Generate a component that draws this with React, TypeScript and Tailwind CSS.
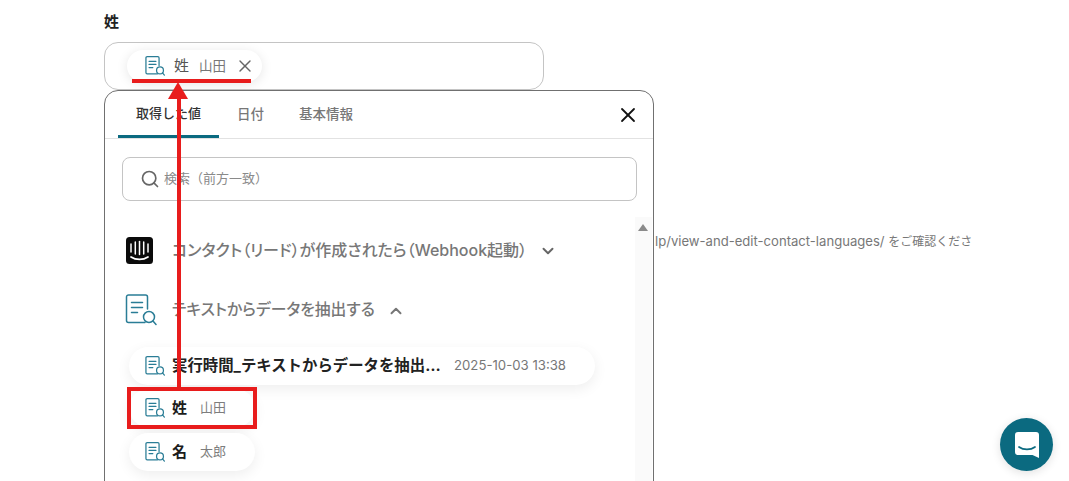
import { X, Search, ChevronDown, ChevronUp } from 'lucide-react';

function DocSearchIcon({ size = 20 }: { size?: number }) {
  return (
    <svg width={size} height={size} viewBox="0 0 32 32" fill="none" stroke="#2a7d96" strokeWidth={size > 24 ? 1.5 : 2} className="shrink-0">
      <path d="M20 28.5H3.5a2 2 0 0 1-2-2V3a2 2 0 0 1 2-2h17a2 2 0 0 1 2 2v12" strokeLinecap="round" />
      <path d="M6.5 8.5h11M6.5 13.5h11M6.5 18.5h6" strokeLinecap="round" />
      <circle cx="24" cy="23" r="5.5" />
      <path d="M28 27 31 30.5" strokeLinecap="round" />
    </svg>
  );
}

function IntercomLogo() {
  return (
    <svg width="27" height="27" viewBox="0 0 27 27" className="shrink-0">
      <rect width="27" height="27" rx="3.5" fill="#0b0b0b" />
      <g stroke="#fff" strokeWidth="1.5" strokeLinecap="round" fill="none">
        <path d="M5 7v8" />
        <path d="M9.3 5v12" />
        <path d="M13.5 4.5v13" />
        <path d="M17.7 5v12" />
        <path d="M22 7v8" />
        <path d="M5 20c5 3.2 12 3.2 17 0" strokeWidth="1.7" />
      </g>
    </svg>
  );
}

function ValueChip({ name, value, className }: { name: string; value: string; className: string }) {
  return (
    <div className={`flex h-[38px] w-fit items-center rounded-full bg-white pl-[16px] pr-[29px] shadow-[0_4px_14px_rgba(0,0,0,0.07)] ${className}`}>
      <DocSearchIcon />
      <span className="ml-[7px] text-[15px] font-bold text-[#1c1c1c]">{name}</span>
      <span className="ml-[13px] text-[13px] text-[#7d7d7d]">{value}</span>
    </div>
  );
}

export default function App() {
  return (
    <div className="relative h-[481px] w-[1069px] overflow-hidden bg-white pl-[104px] font-['Inter','Noto_Sans_CJK_JP',sans-serif]">
      <div className="flex h-[42px] items-center text-[15px] font-bold leading-none text-[#222]">姓</div>

      <div className="flex h-[48px] w-[440px] items-center rounded-[14px] border border-[#c4c4c4] pb-[1px] pl-[22px]">
        <div className="flex h-[32px] items-center rounded-full bg-white pl-[18px] pr-[7px] shadow-[0_2px_12px_rgba(0,0,0,0.1)]">
          <DocSearchIcon />
          <span className="ml-[9px] mt-[2px] text-[15px] text-[#555]">姓</span>
          <span className="ml-[10px] mt-[2px] text-[13.5px] text-[#777]">山田</span>
          <X size={20} strokeWidth={1.7} className="ml-[9px] mt-[1px] text-[#666]" />
        </div>
      </div>

      <div className="flex items-start">
        <div className="h-[420px] w-[550px] shrink-0 rounded-t-[14px] border border-[#707070] bg-white">
          {/* tabs */}
          <div className="flex h-[48px] items-stretch justify-between border-b border-[#e2e2e2] pl-[13px] pr-[13px]">
            <div className="flex text-[13.5px] font-medium">
              <div className="flex w-[101px] items-center justify-center border-b-[3px] border-[#0b6a80] pt-[2px] text-[13px] text-[#333]">取得した値</div>
              <div className="flex w-[63px] items-center justify-center text-[#777]">日付</div>
              <div className="ml-[9px] flex w-[70px] items-center justify-center text-[#777]">基本情報</div>
            </div>
            <button className="flex items-center text-[#111]">
              <X size={24} strokeWidth={1.8} />
            </button>
          </div>

          <div className="px-[17px] pt-[18px]">
            <div className="flex h-[44px] w-[515px] items-center rounded-[8px] border border-[#c4c4c4] pl-[17px]">
              <Search size={20} strokeWidth={2} className="text-[#666]" />
              <span className="ml-[4px] text-[13px] text-[#8a8a8a]">検索（前方一致）</span>
            </div>
          </div>

          <div className="flex">
            <div className="w-[530px] pt-[33px]">
              <div className="flex h-[32px] items-center pl-[21px]">
                <IntercomLogo />
                <span className="ml-[19px] text-[16px] font-medium text-[#777] [font-feature-settings:'palt']">コンタクト（リード）が作成されたら（Webhook起動）</span>
                <ChevronDown size={18} strokeWidth={2.6} className="ml-[12px] mt-[2px] text-[#666]" />
              </div>
              <div className="mt-[28px] flex h-[32px] items-center pl-[20px]">
                <DocSearchIcon size={32} />
                <span className="ml-[15px] text-[15.8px] font-medium text-[#777] [font-feature-settings:'palt']">テキストからデータを抽出する</span>
                <ChevronUp size={18} strokeWidth={2.6} className="ml-[12px] mt-[2px] text-[#777]" />
              </div>
              <div className="mt-[21px] flex flex-col pl-[24px]">
                <div className="flex h-[38px] w-[466px] items-center rounded-full bg-white pl-[16px] shadow-[0_4px_14px_rgba(0,0,0,0.07)]">
                  <DocSearchIcon />
                  <span className="ml-[7px] w-[269px] truncate text-[15.4px] font-bold text-[#222]">実行時間_テキストからデータを抽出する</span>
                  <span className="ml-[13px] text-[13.2px] text-[#777]">2025-10-03 13:38</span>
                </div>
                <ValueChip name="姓" value="山田" className="mt-[4px]" />
                <ValueChip name="名" value="太郎" className="mt-[6px]" />
              </div>
            </div>
            <div className="mt-[16px] flex h-[400px] w-[17px] justify-center bg-[#fafafa] pr-[2px] pt-[7px]">
              <div className="h-0 w-0 border-x-[5px] border-b-[7px] border-x-transparent border-b-[#8a8a8a]" />
            </div>
          </div>
        </div>
        <span className="ml-px mt-[142px] whitespace-nowrap text-[13.1px] text-[#777]">
          lp/view-and-edit-contact-languages/ <span className="text-[12px]">をご確認くださ</span>
        </span>
      </div>

      {/* red annotations */}
      <div className="absolute left-[132px] top-[79px] h-[4px] w-[119px] bg-[#e81c1c]" />
      <div className="absolute left-[177px] top-[96px] h-[292px] w-[4px] bg-[#e81c1c]" />
      <div className="absolute left-[168px] top-[82px] h-0 w-0 border-x-[10px] border-b-[17px] border-x-transparent border-b-[#e81c1c]" />
      <div className="absolute left-[127px] top-[387px] h-[42px] w-[130px] border-[4px] border-[#e81c1c]" />

      {/* chat launcher */}
      <div className="absolute left-[1000px] top-[418px] flex h-[53px] w-[53px] items-center justify-center rounded-full bg-[#0b6a80] shadow-[0_2px_10px_rgba(0,0,0,0.12)]">
        <svg width="24" height="26" viewBox="0 0 24 26" fill="none">
          <path d="M3 0h18a3 3 0 0 1 3 3v23l-6.5-3H3a3 3 0 0 1-3-3V3a3 3 0 0 1 3-3Z" fill="#fff" />
          <path d="M4 15c4.5 3.2 11.5 3.2 16 0" stroke="#0b6a80" strokeWidth="1.7" strokeLinecap="round" />
        </svg>
      </div>
    </div>
  );
}
